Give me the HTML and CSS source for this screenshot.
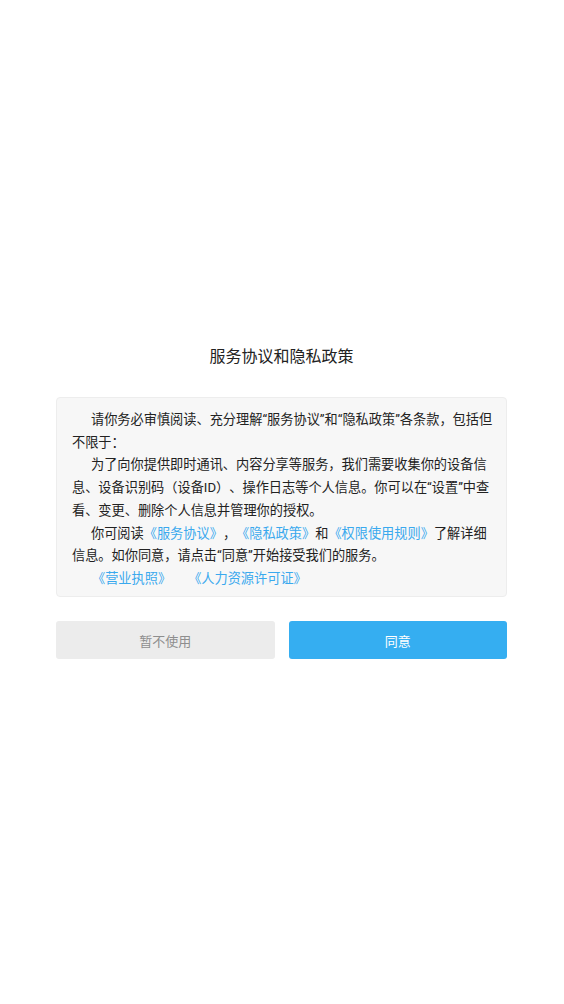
FILE: index.html
```html
<!DOCTYPE html>
<html lang="zh-CN">
<head>
<meta charset="utf-8">
<title>服务协议和隐私政策</title>
<link rel="stylesheet" href="styles.css">
</head>
<body>
<main class="page">
  <h1 class="title">服务协议和隐私政策</h1>
  <section class="notice">
    <p class="para indent">请你务必审慎阅读、充分理解“服务协议”和“隐私政策”各条款，包括但<br>不限于：</p>
    <p class="para indent">为了向你提供即时通讯、内容分享等服务，我们需要收集你的设备信<br>息、设备识别码（设备ID）、操作日志等个人信息。你可以在“设置”中查<br>看、变更、删除个人信息并管理你的授权。</p>
    <p class="para indent">你可阅读<a class="link">《服务协议》</a>，<a class="link">《隐私政策》</a>和<a class="link">《权限使用规则》</a>了解详细<br>信息。如你同意，请点击“同意”开始接受我们的服务。</p>
    <p class="para links"><a class="link first">《营业执照》</a><a class="link second">《人力资源许可证》</a></p>
  </section>
  <div class="actions">
    <button class="btn btn-cancel">暂不使用</button>
    <button class="btn btn-ok">同意</button>
  </div>
</main>
</body>
</html>
```

FILE: styles.css
```css
html, body {
  margin: 0;
  padding: 0;
  background: #ffffff;
}

body {
  font-family: Roboto, "Noto Sans CJK SC", sans-serif;
  color: #222222;
  width: 564px;
  height: 1004px;
  overflow: hidden;
  text-spacing-trim: space-all;
  font-feature-settings: "chws" 0, "halt" 0;
}

.page {
  display: flex;
  flex-direction: column;
  padding: 346px 57px 0 56px;
}

.title {
  margin: 0;
  font-size: 16px;
  line-height: 22px;
  font-weight: 400;
  text-align: center;
  color: #222222;
}

.notice {
  margin-top: 29px;
  box-sizing: border-box;
  height: 200px;
  padding: 11px 8px 6px 15px;
  background: #f7f7f7;
  border: 1px solid #ededed;
  border-radius: 4px;
  font-size: 13.2px;
  line-height: 22.7px;
  color: #222222;
}

.para {
  margin: 0;
  white-space: nowrap;
}

.indent {
  text-indent: 19px;
}

.link {
  color: #3aa9ee;
  text-decoration: none;
}

.links {
  display: flex;
}

.links .first {
  margin-left: 20px;
}

.links .second {
  margin-left: 17px;
}

.actions {
  margin-top: 24px;
  display: flex;
  gap: 14px;
}

.btn {
  flex: 1;
  height: 38px;
  border: none;
  border-radius: 3px;
  font-family: Roboto, "Noto Sans CJK SC", sans-serif;
  font-size: 13px;
  padding: 0;
}

.btn-cancel {
  background: #ececec;
  color: #8e8e8e;
}

.btn-ok {
  background: #35aef1;
  color: #ffffff;
}
```
